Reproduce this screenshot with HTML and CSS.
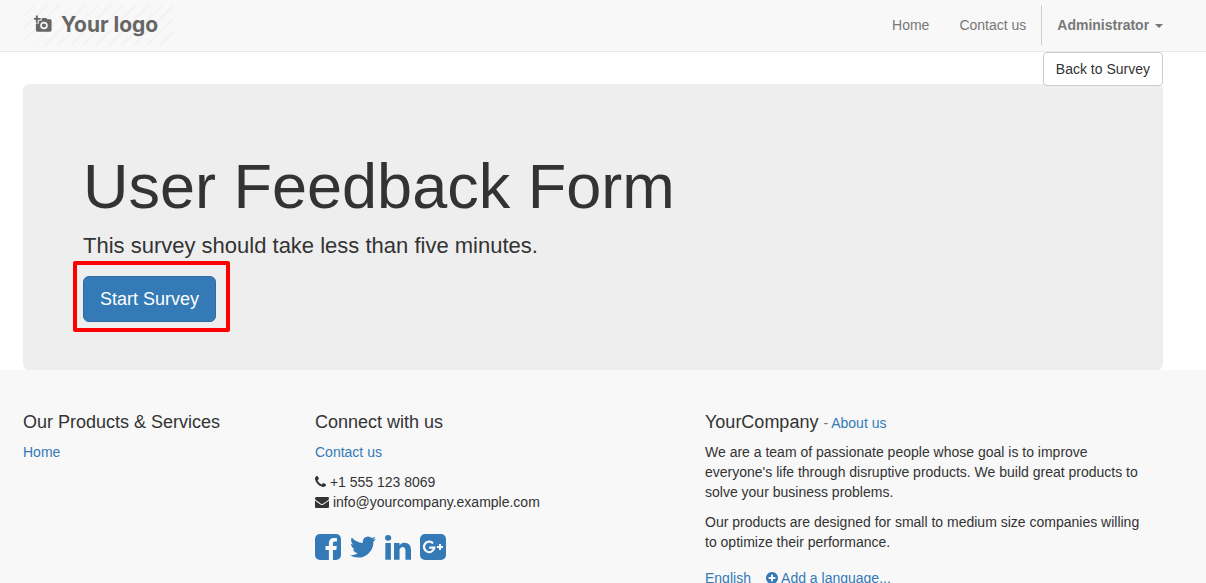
FILE: index.html
```html
<!DOCTYPE html>
<html lang="en">
<head>
<meta charset="utf-8">
<title>User Feedback Form</title>
<link rel="stylesheet" href="styles.css">
</head>
<body>
<header class="site-header">
  <div class="container navbar">
    <a class="logo" href="#" aria-label="Your logo">
      <svg class="logo-icon" viewBox="0 0 20 20" aria-hidden="true">
        <path fill="#666" fill-rule="evenodd" d="M2 0h2v2.500h3v2H4v3H2v-3H0v-2h2zM8 3.500l1-1h4l1 1.500h3q1.500 0 1.500 1.500v10q0 1.500-1.500 1.500H3.500q-1.500 0-1.500-1.500V8.500h3V5.500h3zM10.500 6.500a4 4 0 1 0 0 8a4 4 0 0 0 0-8zM10.500 8.300a2.200 2.200 0 1 1 0 4.400a2.200 2.200 0 0 1 0-4.400z"/>
      </svg>
      <span class="logo-text">Your logo</span>
    </a>
    <nav class="menu">
      <a href="#">Home</a>
      <a href="#">Contact us</a>
      <a class="user" href="#">Administrator <span class="caret"></span></a>
    </nav>
  </div>
</header>
<main class="container">
  <div class="toolbar"><button class="btn btn-default" type="button">Back to Survey</button></div>
  <section class="jumbotron">
    <h1>User Feedback Form</h1>
    <p>This survey should take less than five minutes.</p>
    <div class="highlight"><button class="btn btn-primary" type="button">Start Survey</button></div>
  </section>
</main>
<footer class="site-footer">
  <div class="container columns">
    <section>
      <h4>Our Products &amp; Services</h4>
      <ul><li><a href="#">Home</a></li></ul>
    </section>
    <section>
      <h4>Connect with us</h4>
      <ul>
        <li><a href="#">Contact us</a></li>
      </ul>
      <ul>
        <li><svg class="icon-phone" viewBox="192 128 1408 1536" aria-hidden="true"><path d="M1600 1240q0 27-10 70.500t-21 68.500q-21 50-122 106-94 51-186 51-27 0-52.500-3.500t-57.500-12.500-47.500-14.500-55.500-20.500-49-18q-98-35-175-83-128-79-264.500-215.500t-215.500-264.500q-48-77-83-175-3-9-18-49t-20.500-55.500-14.500-47.500-12.500-57.500-3.500-52.500q0-92 51-186 56-101 106-122 25-11 68.500-21t70.500-10q14 0 21 3 18 6 53 76 11 19 30 54t35 63.500 31 53.500q3 4 17.500 25t21.500 35.500 7 28.500q0 20-28.500 50t-62 55-62 53-28.500 46q0 9 5 22.500t8.500 20.500 14 24 11.500 19q76 137 174 235t235 174q2 1 19 11.500t24 14 20.500 8.500 22.500 5q18 0 46-28.500t53-62 55-62 50-28.500q14 0 28.500 7t35.500 21.500 25 17.500q25 15 53.500 31t63.500 35 54 30q70 35 76 53 3 7 3 21z"/></svg> +1 555 123 8069</li>
        <li><svg class="icon-mail" viewBox="0 128 1792 1536" aria-hidden="true"><path d="M1792 710v794q0 66-47 113t-113 47h-1472q-66 0-113-47t-47-113v-794q44 49 101 87 362 246 497 345 57 42 92.500 65.500t94.500 48 110 24.500h2q51 0 110-24.500t94.500-48 92.500-65.500q170-123 498-345 57-39 100-87zm0-294q0 79-49 151t-122 123q-376 261-468 325-10 7-42.500 31t-54 38.500-52 32.500-57.500 27-50 9h-2q-23 0-50-9t-57.500-27-52-32.500-54-38.500-42.500-31q-91-64-262-182.500t-205-142.500q-62-42-117-115.500t-55-136.500q0-78 41.500-130t118.500-52h1472q65 0 112.500 47t47.500 113z"/></svg> info@yourcompany.example.com</li>
      </ul>
      <div class="social">
        <a href="#" aria-label="Facebook"><svg viewBox="128 128 1536 1536"><path d="M1376 128q119 0 203.500 84.500t84.500 203.500v960q0 119-84.500 203.500t-203.500 84.500h-188v-595h199l30-232h-229v-148q0-56 23.500-84t91.500-28l122-1v-207q-63-9-178-9-136 0-217.500 80t-81.500 226v171h-200v232h200v595h-532q-119 0-203.500-84.500t-84.500-203.500v-960q0-119 84.500-203.500t203.500-84.500h960z"/></svg></a>
        <a href="#" aria-label="Twitter"><svg viewBox="108 128 1576 1536"><path d="M1684 408q-67 98-162 167 1 14 1 42 0 130-38 259.500t-115.500 248.500-184.500 210.500-258 146-323 54.500q-271 0-496-145 35 4 78 4 225 0 401-138-105-2-188-64.500t-114-159.500q33 5 61 5 43 0 85-11-112-23-185.500-111.500t-73.500-205.500v-4q68 38 146 41-66-44-105-115t-39-154q0-88 44-163 121 149 294.500 238.500t371.500 99.500q-8-38-8-74 0-134 94.500-228.500t228.500-94.500q140 0 236 102 109-21 205-78-37 115-142 178 93-10 186-50z"/></svg></a>
        <a href="#" aria-label="LinkedIn"><svg viewBox="128 90 1536 1536"><path d="M477 625v991h-330v-991h330zm21-306q1 73-50.500 122t-135.500 49h-2q-82 0-132-49t-50-122q0-74 51.500-122.500t134.500-48.500 133 48.500 51 122.500zm1166 729v568h-329v-530q0-105-40.500-164.500t-126.500-59.500q-63 0-105.500 34.500t-63.500 85.500q-11 30-11 81v553h-329q2-399 2-647t-1-296l-1-48h329v144h-2q20-32 41-56t56.500-52 87-43.500 114.500-15.500q171 0 275 113.500t104 332.500z"/></svg></a>
        <a href="#" aria-label="Google Plus"><svg viewBox="0 0 26 26"><rect width="26" height="26" rx="5"/><path fill="none" stroke="#f8f8f8" stroke-width="2.300" d="M13 9.400A5.200 5.200 0 1 0 14.300 13.600H9.200"/><path fill="none" stroke="#f8f8f8" stroke-width="2" d="M17 13h6M20 10v6"/></svg></a>
      </div>
    </section>
    <section>
      <h4>YourCompany <small>- <a href="#">About us</a></small></h4>
      <p>We are a team of passionate people whose goal is to improve everyone's life through disruptive products. We build great products to solve your business problems.</p>
      <p>Our products are designed for small to medium size companies willing to optimize their performance.</p>
      <div class="languages">
        <a href="#">English</a>
        <a href="#"><svg class="icon-plus" viewBox="128 128 1536 1536" aria-hidden="true"><path d="M1344 960v-128q0-26-19-45t-45-19h-256v-256q0-26-19-45t-45-19h-128q-26 0-45 19t-19 45v256h-256q-26 0-45 19t-19 45v128q0 26 19 45t45 19h256v256q0 26 19 45t45 19h128q26 0 45-19t19-45v-256h256q26 0 45-19t19-45zm320-64q0 209-103 385.500t-279.500 279.500-385.500 103-385.500-103-279.500-279.500-103-385.500 103-385.500 279.500-279.500 385.500-103 385.500 103 279.500 279.500 103 385.500z"/></svg> Add a language...</a>
      </div>
    </section>
  </div>
</footer>
</body>
</html>
```
FILE: styles.css
```css
* { box-sizing: border-box; }
html { scrollbar-width: none; }
body {
  margin: 0;
  background: #fff;
  color: #333;
  font: 14px/20px "Liberation Sans", Arial, sans-serif;
}
a { color: #337ab7; text-decoration: none; }
h1, h4, p, ul { margin: 0; padding: 0; font-weight: normal; }
ul { list-style: none; }
svg { fill: currentColor; }

.container {
  max-width: 1206px;
  margin: 0 auto;
  padding: 0 43px 0 23px;
}

.site-header { background: #f8f8f8; border-bottom: 1px solid #e7e7e7; }
.navbar {
  display: flex;
  justify-content: space-between;
  padding-top: 5px;
  padding-bottom: 6px;
}
.logo {
  display: flex;
  align-items: center;
  gap: 8px;
  width: 150px;
  height: 40px;
  padding-left: 11px;
  color: #666;
  background: repeating-linear-gradient(135deg, #f8f8f8 0 7px, #f3f3f3 7px 9px);
}
.logo-icon { width: 19px; height: 20px; }
.logo-text { font: 700 21px/40px Inter, sans-serif; }
.menu { display: flex; }
.menu a { padding: 10px 15px; color: #777; }
.menu .user {
  padding-right: 0;
  border-left: 1px solid #ccc;
  font-weight: bold;
}
.caret {
  display: inline-block;
  margin-left: 2px;
  vertical-align: middle;
  border-top: 4px solid;
  border-left: 4px solid transparent;
  border-right: 4px solid transparent;
}

.btn {
  border: 1px solid;
  font-family: inherit;
  cursor: pointer;
}
.btn-default {
  padding: 6px 12px;
  border-color: #ccc;
  border-radius: 4px;
  background: #fff;
  color: #333;
  font-size: 14px;
  line-height: 20px;
}
.btn-primary {
  padding: 10px 16px;
  border-color: #2e6da4;
  border-radius: 6px;
  background: #337ab7;
  color: #fff;
  font-size: 18px;
  line-height: 24px;
}
.toolbar {
  display: flex;
  justify-content: flex-end;
  position: relative;
  z-index: 1;
  margin-bottom: -2px;
}
.jumbotron {
  padding: 68px 60px 48px;
  border-radius: 6px;
  background: #eee;
}
.jumbotron h1 { margin-bottom: 10px; font-size: 63px; line-height: 69px; }
.jumbotron p { margin-bottom: 15px; font-size: 22px; line-height: 30px; }
.highlight { display: flex; position: relative; width: fit-content; }
.highlight::after {
  content: "";
  position: absolute;
  inset: -15px -14px -10px -10px;
  border: 4px solid #f00;
  border-radius: 2px;
  pointer-events: none;
}

.site-footer { padding: 42px 0 24px; background: #f8f8f8; }
.columns {
  display: grid;
  grid-template-columns: 262fr 360fr 458fr;
  gap: 30px;
}
.columns h4 { margin-bottom: 10px; font-size: 18px; line-height: 20px; }
.columns small { color: #777; font-size: 14px; line-height: 14px; }
.columns p, .columns ul { margin-bottom: 10px; }
.columns p { padding-right: 12px; }
.icon-phone, .icon-mail, .icon-plus { height: 12px; vertical-align: -1px; }
.icon-phone { width: 11px; }
.icon-mail { width: 14px; }
.icon-plus { width: 12px; }
.social { display: flex; gap: 9px; padding-top: 12px; }
.social svg { display: block; width: 26px; height: 26px; }
.languages { display: flex; gap: 15px; padding-top: 6px; }
```
